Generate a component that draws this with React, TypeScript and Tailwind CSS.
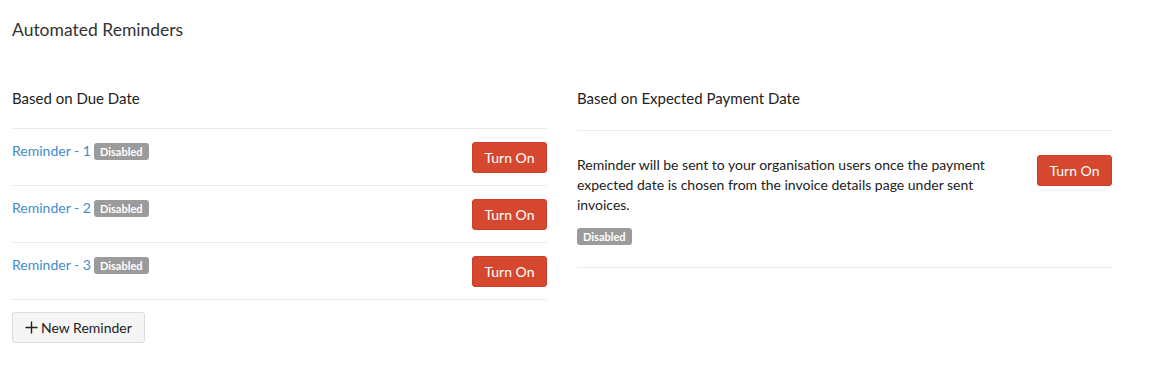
import React from "react";

const Badge = () => (
  <span className="inline-flex h-[17px] items-center rounded-[3px] bg-[#9b9b9b] px-[6px] text-[11px] font-bold leading-none text-white">
    Disabled
  </span>
);

const TurnOn = () => (
  <button className="h-[31px] w-[75px] shrink-0 rounded-[3px] border border-[#c9402a] bg-[#d6472f] text-[14px] text-white">
    Turn On
  </button>
);

const reminders = ["Reminder - 1", "Reminder - 2", "Reminder - 3"];

export default function App() {
  return (
    <div className="min-h-[367px] bg-white pl-[12px] pt-[19px] text-[#222] font-['Lato','Liberation_Sans',sans-serif]">
      <h1 className="text-[17.5px] font-normal leading-[22px] text-[#333]">Automated Reminders</h1>

      <div className="mt-[47px] flex gap-[30px]">
        <div className="w-[535px]">
          <div className="text-[15px] leading-[20px] pb-[20px] border-b border-[#ebebeb]">Based on Due Date</div>
          {reminders.map((r) => (
            <div key={r} className="flex items-start justify-between border-b border-[#ebebeb] pt-[13px] pb-[12px]">
              <div className="flex items-center gap-[3px] text-[14px] leading-[20px] -mt-[1px]">
                <span className="text-[#408dcb]">{r}</span>
                <Badge />
              </div>
              <TurnOn />
            </div>
          ))}
          <button className="mt-[12px] flex h-[31px] items-center gap-[3px] rounded-[3px] border border-[#dcdcdc] bg-[#f5f5f5] px-[12px] text-[14px] text-[#222]">
            <svg width="13" height="13" viewBox="0 0 13 13" fill="none" stroke="#222" strokeWidth="1.4">
              <path d="M6.5 0.5v12M0.5 6.5h12" />
            </svg>
            New Reminder
          </button>
        </div>

        <div className="w-[535px]">
          <div className="text-[15px] leading-[20px] pb-[22px] border-b border-[#ebebeb]">Based on Expected Payment Date</div>
          <div className="flex items-start justify-between border-b border-[#ebebeb] pt-[24px] pb-[22px]">
            <div className="w-[420px]">
              <p className="text-[14px] leading-[20px]">
                Reminder will be sent to your organisation users once the payment expected date is chosen from the invoice details page under sent invoices.
              </p>
              <div className="mt-[13px] flex">
                <Badge />
              </div>
            </div>
            <TurnOn />
          </div>
        </div>
      </div>
    </div>
  );
}
